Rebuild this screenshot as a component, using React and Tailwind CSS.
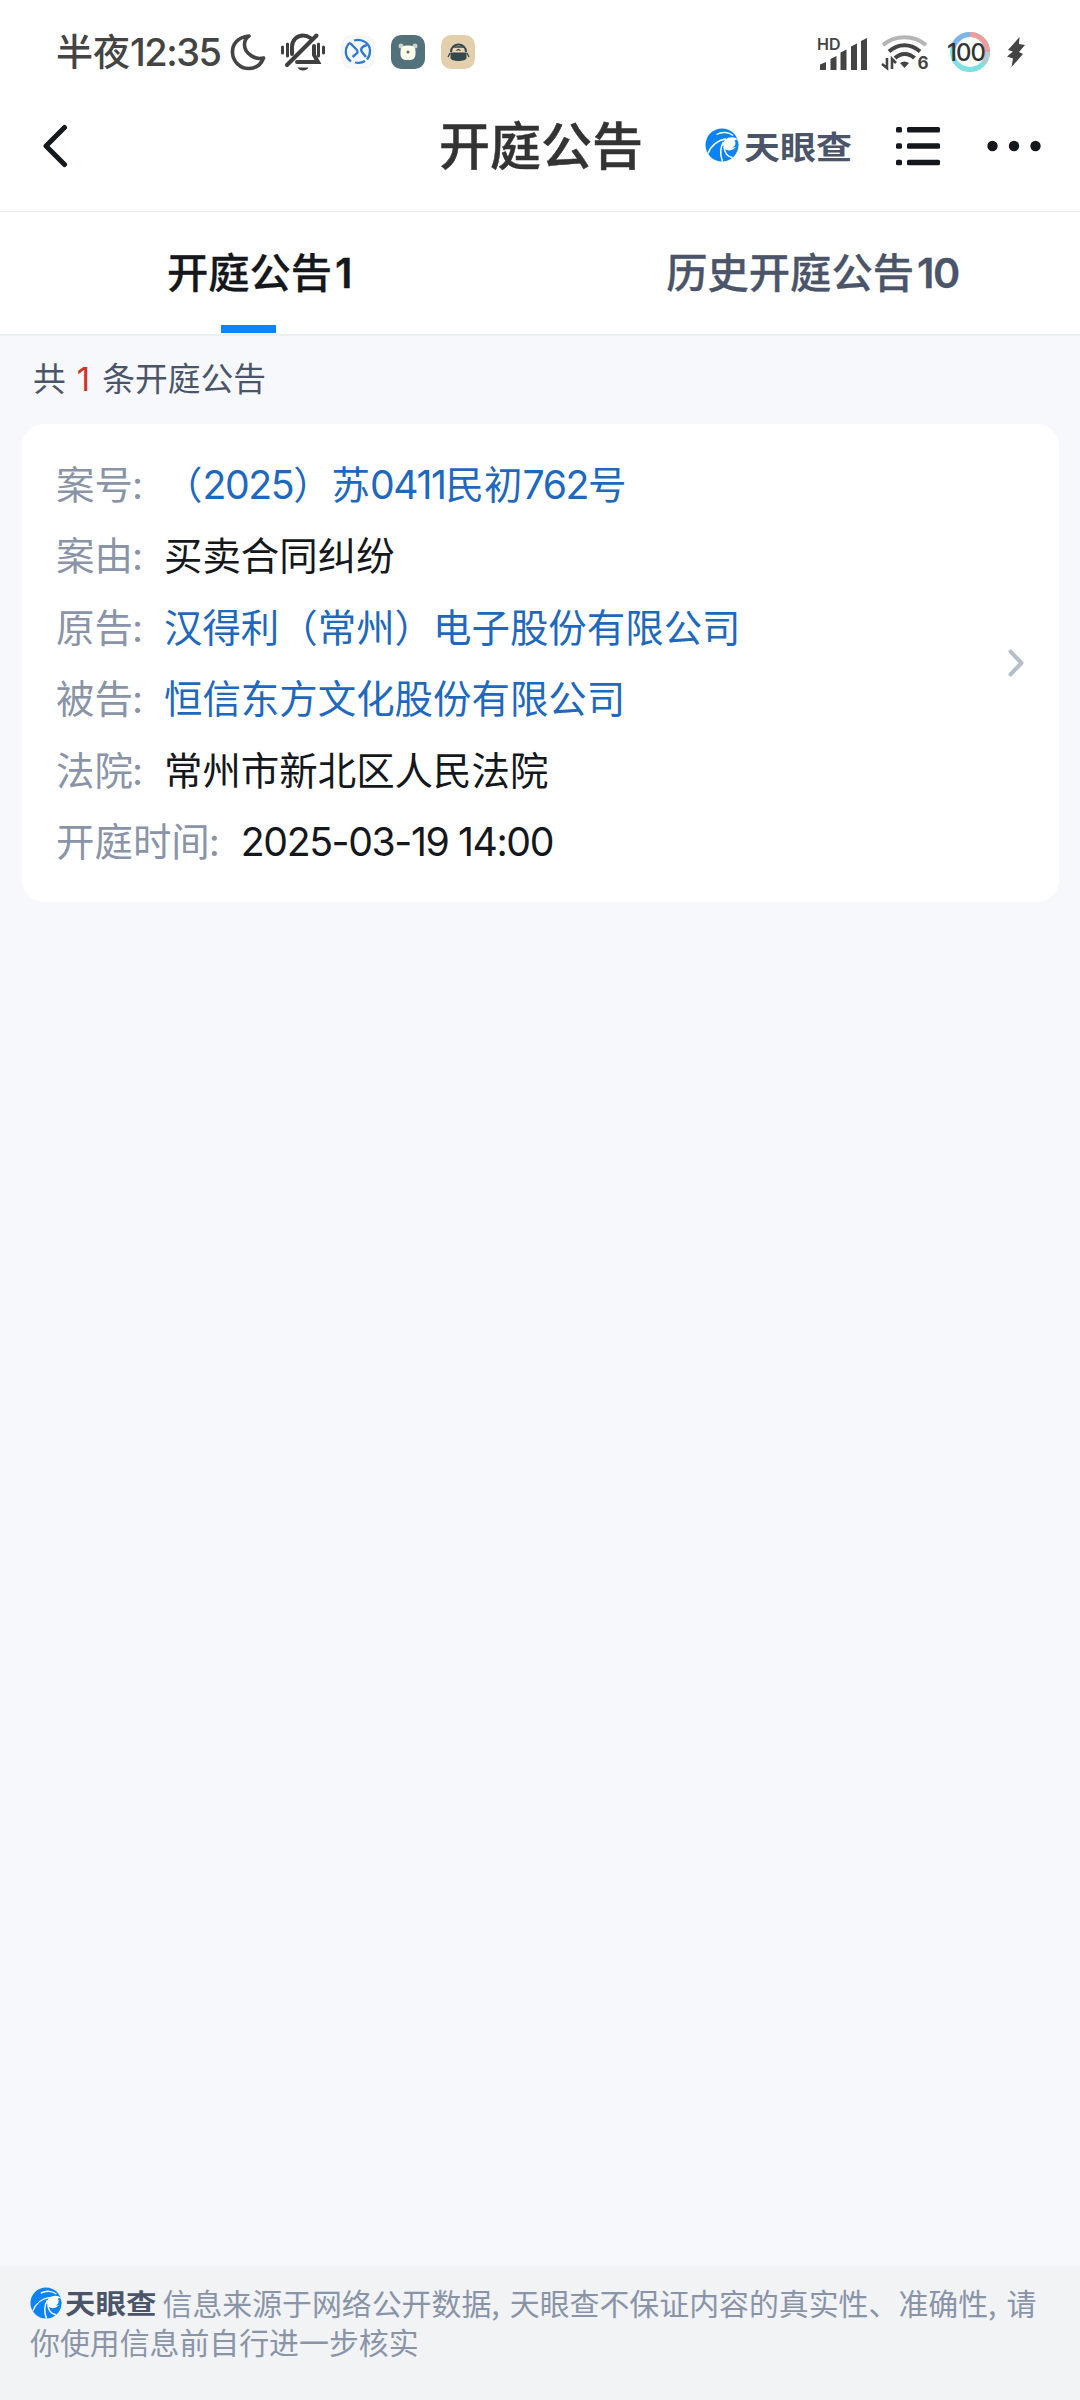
import React from 'react';

const tabs = [
  { name: '开庭公告', count: '1', active: true },
  { name: '历史开庭公告', count: '10', active: false },
];

const rows = [
  { label: '案号', value: '（2025）苏0411民初762号', link: true },
  { label: '案由', value: '买卖合同纠纷' },
  { label: '原告', value: '汉得利（常州）电子股份有限公司', link: true },
  { label: '被告', value: '恒信东方文化股份有限公司', link: true },
  { label: '法院', value: '常州市新北区人民法院' },
  { label: '开庭时间', value: '2025-03-19 14:00' },
];

// Latin digits get their own face, Chinese stays on the parent font
const Mixed = ({ text }) =>
  text.split(/([0-9][0-9:\- ]*)/).map((part, i) =>
    /^[0-9]/.test(part) ? (
      <span key={i} className="font-['Inter'] leading-none tracking-[-0.036em] text-[1.02em]">{part}</span>
    ) : (
      <React.Fragment key={i}>{part}</React.Fragment>
    )
  );

const LogoMark = ({ className }) => (
  <svg viewBox="0 0 34 34" className={className} fill="none">
    <circle cx="17" cy="17" r="16.5" fill="#0a84f5" />
    <path d="M33 11.500C29.500 8.500 24 8.500 20.500 11.500c-3 2.700-3 7-.5 9.500 3 2.500 7.500 1.500 10-1 1.800-1.500 3.200-3 4-5z" fill="#fff" />
    <path d="M29.500 12.500c1.800 2.500 1 5.500-2 7 3 .5 5-1 6-2.500 0-2-.6-4-1.500-5.500z" fill="#0a84f5" />
    <path d="M21 11C13 12 6 17.500 3 25.500M11.500 6.500C17 3.500 24 4 28 7.500" stroke="#fff" strokeWidth="1.400" />
    <path d="M18.500 14c-3.500 6-3.500 13-1 19.500M19 19c.5 6 3.500 9.500 8.500 10.500" stroke="#fff" strokeWidth="1.500" />
  </svg>
);

const StatusBar = () => (
  <div className="flex h-[103px] items-center pl-14 pr-[54px] text-[#444]">
    <span className="text-[37px] font-medium leading-none">
      半夜<span className="font-['Inter'] text-[38px] tracking-[-0.04em]">12:35</span>
    </span>
    <svg viewBox="0 0 36 38" className="ml-[10px] h-[38px] w-9" fill="none">
      <path d="M19 3C8 4 2 11 2.500 20c.6 9 8 15.500 16 15.500 7 0 12.500-4 15-10.500C25 27.500 14 20 14.500 11c.2-3.500 1.500-6 4.500-8z" stroke="#444" strokeWidth="3.600" strokeLinejoin="round" />
    </svg>
    <svg viewBox="0 0 46 40" className="ml-[14px] h-10 w-[46px]" fill="none" stroke="#3f3f3f" strokeWidth="3.400" strokeLinecap="round">
      <path d="M2.500 15v6M7.500 12v12M38.500 12v12M43.500 15v6" strokeWidth="3" />
      <path d="M12 22v-7c0-7 5-11.500 11-11.500 3 0 5.500 1 7.500 2.500M34 14v9l4 7H17" strokeWidth="4" />
      <path d="M36.500 3.500L7 33" strokeWidth="4" />
      <path d="M17.500 35.500h11c-2 4-9 4-11 0z" fill="#3f3f3f" stroke="none" />
    </svg>
    <svg viewBox="0 0 34 34" className="ml-[15px] h-[34px] w-[34px]" fill="none">
      <rect x="1" y="1" width="32" height="32" rx="9" fill="#f5f8fc" stroke="#fbf0dc" />
      <path d="M9 7.500C3 13 3.500 22 10 26.500M13 5.500C22 3 29 9 29 16c0 4-1 6-3 8.500M14 27.500c4 1 7 .5 10-1.500" stroke="#3179ce" strokeWidth="2.300" />
      <path d="M9 8l6 6c2 2 2 4 0 5l-3.500 3M26 10c-5 1-7 4-5 7l4 5" stroke="#3179ce" strokeWidth="2.400" />
    </svg>
    <svg viewBox="0 0 34 34" className="ml-4 h-[34px] w-[34px]">
      <rect width="34" height="34" rx="10" fill="#52717a" />
      <circle cx="10" cy="11" r="2.500" fill="#c7d2ca" />
      <circle cx="24" cy="11" r="2.500" fill="#c7d2ca" />
      <rect x="9.500" y="10.500" width="15" height="14.500" rx="5.500" fill="#fbfbe9" />
      <circle cx="17" cy="17" r="1.500" fill="#52717a" />
    </svg>
    <svg viewBox="0 0 34 34" className="ml-4 h-[34px] w-[34px]" fill="none">
      <rect width="34" height="34" rx="10" fill="#e3cfac" />
      <path d="M10 17c0-10 15-10 15 0" fill="#e9d5b3" stroke="#33484f" strokeWidth="2" />
      <path d="M9.500 17.500h16v5.500c0 4-16 4-16 0z" fill="#33484f" />
      <path d="M11.500 12h12M9 18l-2 4M26 18l2 4M15.500 15.500l2-1 2 1" stroke="#33484f" strokeWidth="1.300" />
    </svg>

    <div className="ml-auto flex items-center">
      <svg viewBox="-4 -6 60 42" className="-mr-1 h-[42px] w-[60px]" fill="#444">
        <text x="0" y="12.500" fontFamily="Inter" fontSize="16" fontWeight="600">HD</text>
        <path d="M3 27.500l6-2.500v8H3zM13.500 22l6-3v14h-6zM23.500 15.500l6-3V33h-6zM34 9.500l6-3V33h-6zM44 4l6-3v32h-6z" strokeLinejoin="round" />
      </svg>
      <svg viewBox="0 -3 54 44" className="-mr-1.5 ml-3 h-11 w-[54px]" fill="none" strokeWidth="4">
        <path d="M2 12C14 1.500 33 1.500 45 12" stroke="#b5b5b5" />
        <path d="M8 18.500c9-8.500 22-8.500 31 0M14 25c5.500-5.500 14-5.500 19.500 0" stroke="#444" />
        <path d="M19 30c3-2 6-2 9 0l-4.500 5z" fill="#444" />
        <path d="M6 25v10l-5-4M11 36V26l4 4" stroke="#444" strokeWidth="2.600" />
        <text x="36.500" y="35.500" fill="#444" fontFamily="Inter" fontSize="17" fontWeight="700">6</text>
      </svg>
      <svg viewBox="0 0 46 42" className="ml-[17px] h-[42px] w-[46px]" fill="none">
        <circle cx="24" cy="21" r="17.500" stroke="#7ee0e0" strokeWidth="5" />
        <path d="M24 3.500A17.500 17.500 0 0 1 41.500 21" stroke="#ee9c9e" strokeWidth="5" />
        <path d="M41.500 21A17.500 17.500 0 0 1 38 31.500" stroke="#bcc9cb" strokeWidth="5" />
        <path d="M24 3.500A17.500 17.500 0 0 0 7 17" stroke="#7fb4e8" strokeWidth="5" />
        <text x="1" y="30" fill="#333" fontFamily="Inter" fontSize="24" fontWeight="500" textLength="39">100</text>
      </svg>
      <svg viewBox="0 0 20 32" className="ml-[14px] h-8 w-5" fill="#444">
        <path d="M13.500 1L2 14l5 1.500L1 20.500l6 2L5.500 31 17 18l-4-2 6-7-6-1z" />
      </svg>
    </div>
  </div>
);

const Header = () => (
  <div className="flex h-[109px] items-start border-b border-[#ececec] pl-[42px] pr-[38px] pt-px">
    <svg viewBox="0 0 26 44" className="mt-5 h-11 w-[26px]" fill="none">
      <path d="M22.500 3.500L4 22l18.500 18.500" stroke="#14171c" strokeWidth="5" strokeLinecap="round" strokeLinejoin="round" />
    </svg>
    <h1 className="ml-[371px] mt-[13px] text-[51px] font-medium leading-[52px] text-[#333] [-webkit-text-stroke:0.5px_#333]">开庭公告</h1>
    <div className="ml-[62px] mt-6 flex items-center">
      <LogoMark className="h-[34px] w-[34px]" />
      <span className="ml-[5px] inline-block scale-y-[0.88] text-[36px] font-bold leading-[32px] text-[#4b5569]">天眼查</span>
    </div>
    <svg viewBox="0 0 46 40" className="ml-auto mt-[22px] h-10 w-[46px]" fill="#14171c">
      <rect x="1" y="1" width="6" height="5.500" rx="1.500" />
      <rect x="1" y="17.300" width="6" height="5.500" rx="1.500" />
      <rect x="1" y="33.800" width="6" height="5.500" rx="1.500" />
      <rect x="12" y="1" width="33" height="5.500" rx="1.500" />
      <rect x="12" y="17.300" width="33" height="5.500" rx="1.500" />
      <rect x="12" y="33.800" width="33" height="5.500" rx="1.500" />
    </svg>
    <svg viewBox="0 0 56 12" className="ml-[45px] mt-9 h-3 w-14" fill="#14171c">
      <circle cx="6.500" cy="6" r="5.200" />
      <circle cx="28" cy="6" r="5.200" />
      <circle cx="49.500" cy="6" r="5.200" />
    </svg>
  </div>
);

const App = () => {
  return (
    <div className="flex h-[2400px] w-[1080px] flex-col bg-[#f6f8fc] font-['Noto_Sans_CJK_SC',sans-serif]">
      <div className="bg-white">
        <StatusBar />
        <Header />
        <div className="flex h-[124px] border-b-2 border-[#eceff2]">
          {tabs.map((tab) => (
            <div
              key={tab.name}
              className={`flex w-1/2 flex-col items-center justify-between pb-px pt-[30px] text-[41.300px] font-medium leading-[56px] ${
                tab.active ? 'pr-[22px] text-[#14171c]' : 'pl-[5px] text-[#4b5569]'
              }`}
            >
              <span className="whitespace-nowrap [-webkit-text-stroke:0.3px]">
                {tab.name}
                <span className="ml-[3px] font-['Inter'] font-semibold leading-none tracking-[-0.035em]">{tab.count}</span>
              </span>
              {tab.active && <div className="-ml-[21px] h-2 w-[55px] bg-[#0a84ff]" />}
            </div>
          ))}
        </div>
      </div>

      <p className="h-[88px] whitespace-pre pl-[33px] pt-[19px] text-[32.800px] leading-[44px] text-[#4b5569]">
        共<span className="pl-[11px] pr-3 font-['Inter'] leading-none text-[#cf3226]">1</span>条开庭公告
      </p>

      <div className="ml-[22px] mr-[21px] flex h-[478px] items-center justify-between rounded-[22px] bg-white pl-[34px] pr-[34px]">
        <div className="pb-[5px]">
          {rows.map((row) => (
            <div key={row.label} className="flex h-[71.500px] items-center text-[38.450px] leading-[56px]">
              <span className="text-[#8a94a8]">
                {row.label}<span className="-ml-px font-['Inter'] leading-none">:</span>
              </span>
              <span className={row.link ? 'ml-[21px] text-[#1e69bd]' : 'ml-[21px] text-[#14171c]'}>
                <Mixed text={row.value} />
              </span>
            </div>
          ))}
        </div>
        <svg viewBox="0 0 18 30" className="h-[30px] w-[18px]" fill="none">
          <path d="M3.500 3.500L14.500 15l-11 11.500" stroke="#b7bfcb" strokeWidth="4" strokeLinecap="round" strokeLinejoin="round" />
        </svg>
      </div>

      <div className="mt-auto h-[134px] bg-[#f1f3f5] pl-[30px] pt-[17px] text-[29.900px] leading-[39px] text-[#8a94a8]">
        <div className="flex items-center whitespace-pre">
          <LogoMark className="h-8 w-8" />
          <span className="ml-[3px] mr-[6px] inline-block scale-y-[0.88] text-[30.500px] font-bold text-[#4b5569]">天眼查</span>
          <span className="[word-spacing:3.5px]">信息来源于网络公开数据, 天眼查不保证内容的真实性、准确性, 请</span>
        </div>
        <div>你使用信息前自行进一步核实</div>
      </div>
    </div>
  );
};

export default App;
